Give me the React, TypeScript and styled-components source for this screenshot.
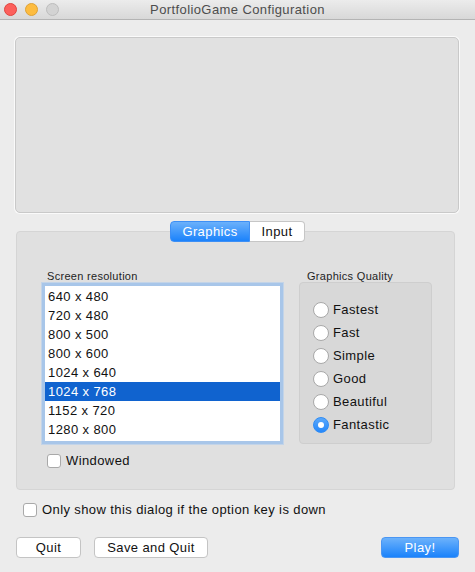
import React, { useState } from 'react';
import styled, { createGlobalStyle, css } from 'styled-components';

const GlobalStyle = createGlobalStyle`
  html, body {
    margin: 0;
    padding: 0;
    background: #ececec;
  }
  body {
    font-family: "Liberation Sans", Arial, Helvetica, sans-serif;
    font-size: 13px;
    letter-spacing: 0.4px;
    color: #1a1a1a;
  }
  button {
    letter-spacing: 0.4px;
  }
`

const Window = styled.div`
  width: 475px;
  height: 572px;
  display: flex;
  flex-direction: column;
  background: #ececec;
  overflow: hidden;
`

const TitleBar = styled.div`
  height: 19px;
  flex-shrink: 0;
  display: flex;
  align-items: center;
  justify-content: center;
  position: relative;
  background: linear-gradient(#ececec, #d8d8d8);
  border-bottom: 1px solid #b4b4b4;
  color: #4d4d4d;
  font-size: 13px;
`

const Lights = styled.div`
  position: absolute;
  left: 4px;
  top: 3px;
  display: flex;
  gap: 8px;
`

const Light = styled.span<{ $fill: string; $edge: string }>`
  width: 11px;
  height: 11px;
  border-radius: 50%;
  background: ${p => p.$fill};
  border: 1px solid ${p => p.$edge};
`

const Content = styled.div`
  display: flex;
  flex-direction: column;
  padding: 16px 16px 0 14px;
`

const Preview = styled.div`
  height: 174px;
  border-radius: 5px;
  border: 1px solid #c9c9c9;
  background: #e1e1e1;
  box-shadow: 0 0 0 1px #fafafa;
  margin: 1px 0 0 1px;
  width: 442px;
`

const TabRow = styled.div`
  display: flex;
  justify-content: center;
  margin-top: 8px;
  margin-bottom: -11px;
  position: relative;
  z-index: 1;
  padding-left: 2px;
`

const Tab = styled.button<{ $active?: boolean }>`
  height: 21px;
  font-family: inherit;
  font-size: 13px;
  padding: 0;
  border: 1px solid #c6c6c6;
  background: #ffffff;
  color: #111;
  width: 55px;
  border-radius: 0 4px 4px 0;
  border-left: none;
  ${p => p.$active && css`
    width: 80px;
    border-radius: 4px 0 0 4px;
    border: 1px solid #3d8ff5;
    background: linear-gradient(#6bb1fb, #1b82fb);
    color: #fff;
  `}
`

const Panel = styled.div`
  margin-left: 2px;
  width: 439px;
  height: 259px;
  background: #e0e0e0;
  border: 1px solid #d5d5d5;
  border-radius: 4px;
  display: flex;
  gap: 16px;
  padding: 37px 0 0 25px;
  box-sizing: border-box;
`

const Column = styled.div`
  display: flex;
  flex-direction: column;
`

const Caption = styled.div<{ $indent: number }>`
  font-size: 11px;
  letter-spacing: 0.3px;
  color: #1e1e1e;
  padding-left: ${p => p.$indent}px;
  height: 14px;
  line-height: 14px;
`

const ResolutionList = styled.div`
  width: 235px;
  height: 154px;
  border: 3px solid #a8c6e9;
  outline: 1px solid #c3d4e8;
  background: #fff;
  padding-top: 1px;
  box-sizing: content-box;
  display: flex;
  flex-direction: column;
`

const Row = styled.div<{ $selected?: boolean }>`
  height: 19px;
  line-height: 19px;
  padding-left: 3px;
  font-size: 13px;
  color: ${p => (p.$selected ? '#fff' : '#111')};
  background: ${p => (p.$selected ? '#1063cf' : 'transparent')};
`

const CheckLine = styled.label<{ $indent: number; $top: number }>`
  display: flex;
  align-items: center;
  gap: 5px;
  padding-left: ${p => p.$indent}px;
  margin-top: ${p => p.$top}px;
  font-size: 13px;
  color: #111;
`

const Box = styled.span`
  width: 12px;
  height: 12px;
  border: 1px solid #a9a9a9;
  border-radius: 3px;
  background: #fff;
  flex-shrink: 0;
`

const QualityBox = styled.div`
  width: 133px;
  height: 162px;
  margin-top: -1px;
  background: #d8d8d8;
  border: 1px solid #cecece;
  border-radius: 4px;
  display: flex;
  flex-direction: column;
  gap: 6px;
  padding: 18px 0 0 13px;
  box-sizing: border-box;
`

const RadioLine = styled.div`
  display: flex;
  align-items: center;
  gap: 4px;
  height: 17px;
  font-size: 13px;
  color: #111;
`

const RadioDot = styled.span<{ $on?: boolean }>`
  width: 14px;
  height: 14px;
  border-radius: 50%;
  border: 1px solid #a8a8a8;
  background: #fff;
  display: flex;
  align-items: center;
  justify-content: center;
  flex-shrink: 0;
  ${p => p.$on && css`
    border-color: #2f8cf5;
    background: linear-gradient(#5aa8fb, #2688fb);
    &::after {
      content: '';
      width: 6px;
      height: 6px;
      border-radius: 50%;
      background: #fff;
    }
  `}
`

const Buttons = styled.div`
  display: flex;
  gap: 13px;
  margin-top: 20px;
  padding-left: 2px;
`

const Button = styled.button<{ $width: number; $primary?: boolean }>`
  width: ${p => p.$width}px;
  height: 21px;
  padding: 0;
  font-family: inherit;
  font-size: 13px;
  color: #111;
  background: #fff;
  border: 1px solid #c4c4c4;
  border-radius: 4px;
  ${p => p.$primary && css`
    margin-left: auto;
    background: linear-gradient(#6cb2fb, #1a82fb);
    border-color: #4a96f3;
    color: #fff;
  `}
`

const resolutions = ['640 x 480', '720 x 480', '800 x 500', '800 x 600', '1024 x 640', '1024 x 768', '1152 x 720', '1280 x 800']
const qualities = ['Fastest', 'Fast', 'Simple', 'Good', 'Beautiful', 'Fantastic']

const App = () => {
    const [tab, setTab] = useState('Graphics')
    const [res, setRes] = useState('1024 x 768')
    const [quality, setQuality] = useState('Fantastic')

    return (
        <Window>
            <GlobalStyle/>
            <TitleBar>
                <Lights>
                    <Light $fill="#fc605c" $edge="#e0443e"/>
                    <Light $fill="#fdbc40" $edge="#dea236"/>
                    <Light $fill="#d3d3d3" $edge="#bdbdbd"/>
                </Lights>
                PortfolioGame Configuration
            </TitleBar>
            <Content>
                <Preview/>
                <TabRow>
                    <Tab $active={tab === 'Graphics'} onClick={() => setTab('Graphics')}>Graphics</Tab>
                    <Tab $active={tab === 'Input'} onClick={() => setTab('Input')}>Input</Tab>
                </TabRow>
                <Panel>
                    <Column>
                        <Caption $indent={5}>Screen resolution</Caption>
                        <ResolutionList>
                            {resolutions.map(r =>
                                <Row key={r} $selected={r === res} onClick={() => setRes(r)}>{r}</Row>)}
                        </ResolutionList>
                        <CheckLine $indent={5} $top={9}>
                            <Box/>Windowed
                        </CheckLine>
                    </Column>
                    <Column>
                        <Caption $indent={8}>Graphics Quality</Caption>
                        <QualityBox>
                            {qualities.map(q =>
                                <RadioLine key={q} onClick={() => setQuality(q)}>
                                    <RadioDot $on={q === quality}/>{q}
                                </RadioLine>)}
                        </QualityBox>
                    </Column>
                </Panel>
                <CheckLine $indent={9} $top={12}>
                    <Box/>Only show this dialog if the option key is down
                </CheckLine>
                <Buttons>
                    <Button $width={65}>Quit</Button>
                    <Button $width={114}>Save and Quit</Button>
                    <Button $width={78} $primary>Play!</Button>
                </Buttons>
            </Content>
        </Window>
    );
};

export default App;
